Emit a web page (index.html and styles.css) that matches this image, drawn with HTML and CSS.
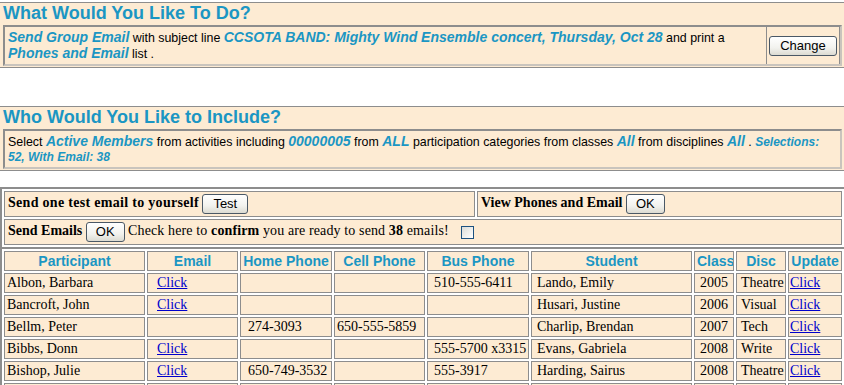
FILE: index.html
```html
<!DOCTYPE html>
<html>
<head>
<meta charset="utf-8">
<title>Group Email</title>
<link rel="stylesheet" href="styles.css">
</head>
<body>
<div class="panel panel-do">
  <div class="panel-title">What Would You Like To Do?</div>
  <div class="panel-body">
    <div class="desc"><span class="val">Send Group Email</span> with subject line <span class="val">CCSOTA BAND: Mighty Wind Ensemble concert, Thursday, Oct 28</span> and print a <span class="val">Phones and Email</span> list .</div>
    <div class="action"><button class="btn btn-change">Change</button></div>
  </div>
</div>

<div class="panel panel-who">
  <div class="panel-title">Who Would You Like to Include?</div>
  <div class="panel-body">
    <div class="desc">Select <span class="val">Active Members</span> from activities including <span class="val">00000005</span> from <span class="val">ALL</span> participation categories from classes <span class="val">All</span> from disciplines <span class="val">All</span> . <span class="sel">Selections: 52, With Email: 38</span></div>
  </div>
</div>

<table class="send">
  <tr>
    <td class="send-test"><b>Send one test email to yourself</b> <button class="btn btn-test">Test</button></td>
    <td class="send-view"><b>View Phones and Email</b> <button class="btn btn-ok">OK</button></td>
  </tr>
  <tr>
    <td colspan="2" class="send-all"><b>Send Emails</b> <button class="btn btn-ok">OK</button> <span class="note">Check here to <b>confirm</b> you are ready to send <b>38</b> emails!</span> <input type="checkbox" class="chk"></td>
  </tr>
</table>

<table class="list">
  <thead>
    <tr>
      <th class="c-part">Participant</th>
      <th class="c-email">Email</th>
      <th class="c-home">Home Phone</th>
      <th class="c-cell">Cell Phone</th>
      <th class="c-bus">Bus Phone</th>
      <th class="c-stud">Student</th>
      <th class="c-class">Class</th>
      <th class="c-disc">Disc</th>
      <th class="c-upd">Update</th>
    </tr>
  </thead>
  <tbody>
    <tr>
      <td class="c-part">Albon, Barbara</td>
      <td class="c-email"><a href="#">Click</a></td>
      <td class="c-home"></td>
      <td class="c-cell"></td>
      <td class="c-bus">510-555-6411</td>
      <td class="c-stud">Lando, Emily</td>
      <td class="c-class">2005</td>
      <td class="c-disc">Theatre</td>
      <td class="c-upd"><a href="#">Click</a></td>
    </tr>
    <tr>
      <td class="c-part">Bancroft, John</td>
      <td class="c-email"><a href="#">Click</a></td>
      <td class="c-home"></td>
      <td class="c-cell"></td>
      <td class="c-bus"></td>
      <td class="c-stud">Husari, Justine</td>
      <td class="c-class">2006</td>
      <td class="c-disc">Visual</td>
      <td class="c-upd"><a href="#">Click</a></td>
    </tr>
    <tr>
      <td class="c-part">Bellm, Peter</td>
      <td class="c-email"></td>
      <td class="c-home">274-3093</td>
      <td class="c-cell">650-555-5859</td>
      <td class="c-bus"></td>
      <td class="c-stud">Charlip, Brendan</td>
      <td class="c-class">2007</td>
      <td class="c-disc">Tech</td>
      <td class="c-upd"><a href="#">Click</a></td>
    </tr>
    <tr>
      <td class="c-part">Bibbs, Donn</td>
      <td class="c-email"><a href="#">Click</a></td>
      <td class="c-home"></td>
      <td class="c-cell"></td>
      <td class="c-bus">555-5700 x3315</td>
      <td class="c-stud">Evans, Gabriela</td>
      <td class="c-class">2008</td>
      <td class="c-disc">Write</td>
      <td class="c-upd"><a href="#">Click</a></td>
    </tr>
    <tr>
      <td class="c-part">Bishop, Julie</td>
      <td class="c-email"><a href="#">Click</a></td>
      <td class="c-home">650-749-3532</td>
      <td class="c-cell"></td>
      <td class="c-bus">555-3917</td>
      <td class="c-stud">Harding, Sairus</td>
      <td class="c-class">2008</td>
      <td class="c-disc">Theatre</td>
      <td class="c-upd"><a href="#">Click</a></td>
    </tr>
    <tr>
      <td class="c-part">Black, Karen</td>
      <td class="c-email"><a href="#">Click</a></td>
      <td class="c-home"></td>
      <td class="c-cell"></td>
      <td class="c-bus"></td>
      <td class="c-stud">Jones, Carly</td>
      <td class="c-class">2009</td>
      <td class="c-disc">Visual</td>
      <td class="c-upd"><a href="#">Click</a></td>
    </tr>
  </tbody>
</table>
</body>
</html>
```
FILE: styles.css
```css
html, body {
  margin: 0;
  padding: 0;
  background: #ffffff;
}
body {
  font-family: "Liberation Sans", Arial, sans-serif;
  font-size: 12px;
  color: #000;
  overflow: hidden;
}

.panel {
  background: #fdebd3;
  border-top: 1px solid #8d8d8d;
  border-bottom: 1px solid #8d8d8d;
}
.panel-do { margin-top: 2px; }
.panel-who { margin-top: 38px; }

.panel-title {
  font-family: "Liberation Sans", Arial, sans-serif;
  font-weight: bold;
  font-size: 18px;
  line-height: 21px;
  height: 21px;
  color: #1b96c3;
  padding-left: 3px;
}

.panel-body {
  display: flex;
  margin: 1px 2px 1px 3px;
  border: 2px solid #8d8d8d;
  border-right-color: #c9c4bd;
  border-bottom-color: #c9c4bd;
}

.desc {
  flex: 1;
  padding: 3px 4px 2px 3px;
  font-size: 12.4px;
  line-height: 15px;
}
.val {
  font-weight: bold;
  font-style: italic;
  font-size: 14px;
  color: #1b96c3;
}
.sel {
  font-weight: bold;
  font-style: italic;
  font-size: 12px;
  color: #1b96c3;
}

.action {
  width: 72px;
  border-left: 1px solid #8d8d8d;
  border-right: 1px solid #8d8d8d;
  display: flex;
  align-items: center;
  justify-content: center;
}

.btn {
  font-family: "Liberation Sans", Arial, sans-serif;
  font-size: 13px;
  height: 20px;
  line-height: 16px;
  padding: 0 9px;
  margin: 0;
  color: #000;
  border: 1px solid #4a5866;
  border-radius: 3px;
  background: linear-gradient(#ffffff, #f2f2ee 60%, #dcdbd2);
  vertical-align: middle;
}
.btn-change { padding: 0 10px; }
.btn-test { padding: 0 10px; }

.send {
  margin-top: 16px;
  width: 100%;
  border-collapse: separate;
  border-spacing: 2px;
  border: 2px solid #8d8d8d;
  border-right-width: 0;
  border-bottom-width: 0;
  font-family: "Liberation Serif", "Times New Roman", serif;
  font-size: 14px;
}
.send td {
  background: #fdebd3;
  border: 1px solid #8d8d8d;
  padding: 2px 3px;
  height: 20px;
}
.send-test b { letter-spacing: 0.3px; }
.send-test { width: 463px; }
.note { letter-spacing: 0.12px; }
.chk {
  appearance: none;
  -webkit-appearance: none;
  width: 13px;
  height: 13px;
  margin: 0 0 0 9px;
  border: 1px solid #1c5180;
  background: linear-gradient(135deg, #dcdcd7, #ffffff);
  vertical-align: middle;
}

.list {
  width: 100%;
  table-layout: fixed;
  border-collapse: separate;
  border-spacing: 2px;
  border: 2px solid #8d8d8d;
  border-right-width: 0;
  font-family: "Liberation Serif", "Times New Roman", serif;
  font-size: 14px;
}
.list th, .list td {
  box-sizing: border-box;
  background: #fdebd3;
  border: 1px solid #8d8d8d;
  padding: 1px 2px;
  line-height: 16px;
  height: 20px;
  white-space: nowrap;
  overflow: hidden;
  text-align: left;
}
.list th {
  font-family: "Liberation Sans", Arial, sans-serif;
  font-weight: bold;
  font-size: 14px;
  color: #1b96c3;
  text-align: center;
}
.list a { color: #0000cc; }

.c-part { width: 141px; }
.c-email { width: 91px; }
.list td.c-email { padding-left: 9px; }
.c-home { width: 92px; }
.list td.c-home { padding-left: 7px; }
.c-cell { width: 91px; }
.c-bus { width: 102px; }
.list td.c-bus { padding-left: 6px; }
.c-stud { width: 161px; }
.list td.c-stud { padding-left: 5px; }
.c-class { width: 40px; }
.list td.c-class { text-align: center; }
.c-disc { width: 50px; }
.list td.c-disc { padding-left: 4px; }
.c-upd { width: 54px; }
.list td.c-upd { padding-left: 1px; }
```
